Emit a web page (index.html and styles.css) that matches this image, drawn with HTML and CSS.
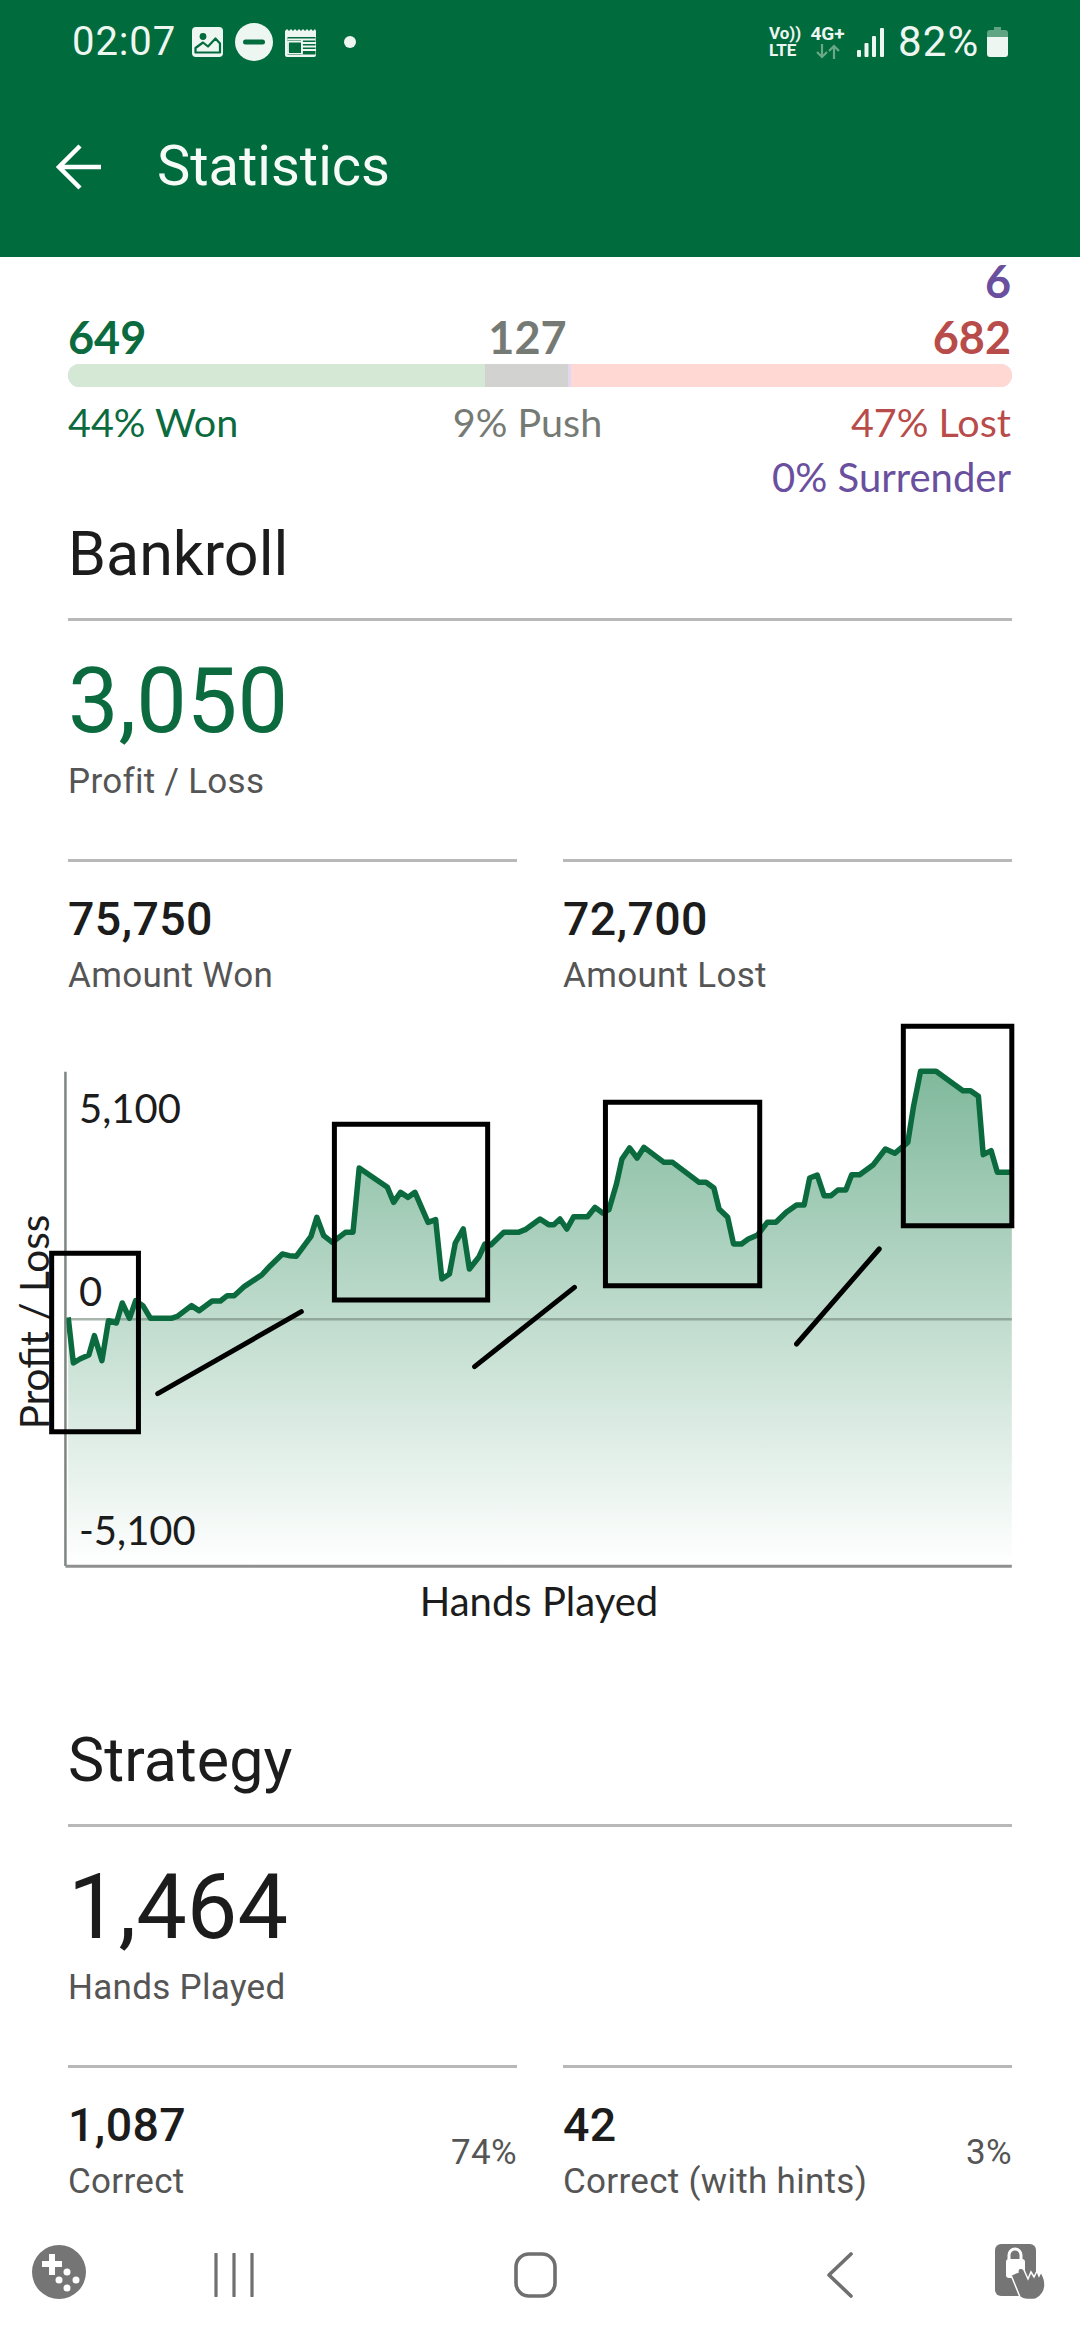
FILE: index.html
```html
<!DOCTYPE html>
<html lang="en">
<head>
<meta charset="utf-8">
<title>Statistics</title>
<link rel="stylesheet" href="styles.css">
</head>
<body>
<div class="screen">
  <header class="header">
    <div class="status">
      <span class="time">02:07</span>
      <svg class="ic-photo" viewBox="0 0 31 30"><rect width="31" height="30" rx="4" fill="#eef6f1"/><circle cx="11" cy="9.5" r="3.4" fill="#006b3c"/><path d="M3.5 25.5V21L11 15.5l5 4 7.5-8 4.5 5v9z" fill="#eef6f1" stroke="#006b3c" stroke-width="2.2" stroke-linejoin="round"/></svg>
      <svg class="ic-dnd" viewBox="0 0 38 38"><circle cx="19" cy="19" r="19" fill="#eef6f1"/><rect x="8" y="16.5" width="22" height="5" rx="2.5" fill="#006b3c"/></svg>
      <svg class="ic-news" viewBox="0 0 33 29"><path d="M0 3l2-2 2 2 2-2 2 2 2-2 2 2 2-2 2 2 2-2 2 2 2-2 2 2 2-2 2 2 2-2 1 2v24a2 2 0 0 1-2 2H2a2 2 0 0 1-2-2z" fill="#eef6f1"/><path d="M2.5 9h28v17.500h-28z" fill="#006b3c"/><path d="M2.500 11.500h28M17 11.500v15M17 15h14M17 18.500h14M17 22h14M3 14h13v11H3z" stroke="#eef6f1" stroke-width="1.800" fill="none"/><path d="M4 14.500h12v10.500H4z" fill="#006b3c"/></svg>
      <span class="dot"></span>
      <span class="status-gap"></span>
      <span class="volte"><b>Vo))</b><b>LTE</b></span>
      <span class="net"><b>4G+</b>
        <svg class="ic-arrows" viewBox="0 0 24 15"><path d="M6 0v13M1 8l5 5 5-5M18 15V2M13 7l5-5 5 5" fill="none" stroke="#6aa988" stroke-width="2.200"/></svg>
      </span>
      <svg class="ic-signal" viewBox="0 0 27 29"><g fill="#eef6f1"><rect x="0" y="22" width="4" height="7" rx="1"/><rect x="7.500" y="15" width="4" height="14" rx="1"/><rect x="15" y="8" width="4" height="21" rx="1"/><rect x="23" y="0" width="4" height="29" rx="1"/></g></svg>
      <span class="battery-text">82%</span>
      <svg class="ic-battery" viewBox="0 0 21 30"><path d="M7 0h7v3h4a3 3 0 0 1 3 3v4H0V6a3 3 0 0 1 3-3h4z" fill="#5fa483"/><path d="M0 10h21v17a3 3 0 0 1-3 3H3a3 3 0 0 1-3-3z" fill="#eef6f1"/></svg>
    </div>
    <div class="appbar">
      <svg class="ic-back" viewBox="0 0 46 46"><path d="M45 23H4M24 2L3 23l21 21" fill="none" stroke="#fff" stroke-width="4.500"/></svg>
      <h1 class="title">Statistics</h1>
    </div>
  </header>

  <main class="content">
    <div class="outcome-top purple">6</div>
    <div class="outcome-row counts">
      <span class="green">649</span><span class="mid gray">127</span><span class="end red">682</span>
    </div>
    <div class="bar">
      <span class="bar-won"></span><span class="bar-push"></span><span class="bar-lost"></span>
    </div>
    <div class="outcome-row labels">
      <span class="green">44% Won</span><span class="mid gray">9% Push</span><span class="end red">47% Lost</span>
    </div>
    <div class="surrender purple">0% Surrender</div>

    <section class="section">
      <h2 class="section-title">Bankroll</h2>
      <div class="hero">
        <div class="hero-value green">3,050</div>
        <div class="caption">Profit / Loss</div>
      </div>
      <div class="pair">
        <div class="cell"><div class="cell-text"><div class="cell-value">75,750</div><div class="caption">Amount Won</div></div></div>
        <div class="cell"><div class="cell-text"><div class="cell-value">72,700</div><div class="caption">Amount Lost</div></div></div>
      </div>
    </section>

    <div class="chart">
      <svg class="plot" viewBox="0 0 3136 1920" preserveAspectRatio="none">
        <defs>
          <linearGradient id="area" gradientUnits="userSpaceOnUse" x1="0" y1="200" x2="0" y2="1701">
            <stop offset="0" stop-color="#7fb89b"/>
            <stop offset="1" stop-color="#ffffff"/>
          </linearGradient>
        </defs>
        <polygon fill="url(#area)" points="198,955 213,1092 232,1080 258,1068 274,1010 296,1085 315,965 338,972 355,912 376,958 394,905 415,920 437,958 497,958 515,952 556,920 578,935 616,906 640,906 660,890 680,890 710,862 760,828 785,800 820,765 840,770 860,772 903,712 920,655 940,710 965,730 1003,700 1025,700 1043,507 1125,565 1143,610 1163,580 1185,595 1205,580 1243,670 1265,662 1283,840 1305,825 1322,732 1345,690 1363,810 1390,775 1408,735 1425,738 1463,700 1505,700 1525,692 1568,660 1593,677 1608,677 1626,660 1646,690 1666,653 1706,653 1728,625 1750,642 1768,632 1790,555 1806,480 1828,447 1850,477 1870,445 1928,490 1953,490 2030,550 2050,550 2073,567 2088,630 2113,655 2130,735 2153,735 2173,720 2200,708 2228,670 2253,670 2283,640 2313,618 2335,618 2351,537 2373,528 2393,590 2413,590 2433,573 2456,573 2473,527 2496,527 2536,497 2571,450 2598,463 2636,430 2653,320 2673,217 2718,217 2796,275 2818,275 2841,292 2855,467 2878,455 2896,520 2938,520 2938,1701 198,1701"/>
        <line class="zero" x1="190" y1="961" x2="2938" y2="961"/>
        <polyline class="curve" points="198,955 213,1092 232,1080 258,1068 274,1010 296,1085 315,965 338,972 355,912 376,958 394,905 415,920 437,958 497,958 515,952 556,920 578,935 616,906 640,906 660,890 680,890 710,862 760,828 785,800 820,765 840,770 860,772 903,712 920,655 940,710 965,730 1003,700 1025,700 1043,507 1125,565 1143,610 1163,580 1185,595 1205,580 1243,670 1265,662 1283,840 1305,825 1322,732 1345,690 1363,810 1390,775 1408,735 1425,738 1463,700 1505,700 1525,692 1568,660 1593,677 1608,677 1626,660 1646,690 1666,653 1706,653 1728,625 1750,642 1768,632 1790,555 1806,480 1828,447 1850,477 1870,445 1928,490 1953,490 2030,550 2050,550 2073,567 2088,630 2113,655 2130,735 2153,735 2173,720 2200,708 2228,670 2253,670 2283,640 2313,618 2335,618 2351,537 2373,528 2393,590 2413,590 2433,573 2456,573 2473,527 2496,527 2536,497 2571,450 2598,463 2636,430 2653,320 2673,217 2718,217 2796,275 2818,275 2841,292 2855,467 2878,455 2896,520 2938,520"/>
        <line class="axis-y" x1="190" y1="218" x2="190" y2="1701"/>
        <line class="axis-x" x1="190" y1="1702" x2="2938" y2="1702"/>
      </svg>
      <span class="tick tick-top">5,100</span>
      <span class="tick tick-zero">0</span>
      <span class="tick tick-bottom">-5,100</span>
      <span class="axis-title-y">Profit / Loss</span>
      <span class="axis-title-x">Hands Played</span>
      <svg class="marks" viewBox="0 0 3136 1920" preserveAspectRatio="none">
        <rect class="mark" x="150" y="763" width="252" height="535"/>
        <rect class="mark" x="971" y="376" width="445" height="527"/>
        <rect class="mark" x="1758" y="310" width="448" height="550"/>
        <rect class="mark" x="2623" y="82" width="315" height="598"/>
        <line class="stroke" x1="458" y1="1184" x2="875" y2="938"/>
        <line class="stroke" x1="1378" y1="1103" x2="1668" y2="865"/>
        <line class="stroke" x1="2313" y1="1035" x2="2553" y2="750"/>
      </svg>
    </div>

    <section class="section strategy">
      <h2 class="section-title">Strategy</h2>
      <div class="hero">
        <div class="hero-value">1,464</div>
        <div class="caption">Hands Played</div>
      </div>
      <div class="pair">
        <div class="cell"><div class="cell-text"><div class="cell-value">1,087</div><div class="caption">Correct</div></div><span class="pct">74%</span></div>
        <div class="cell"><div class="cell-text"><div class="cell-value">42</div><div class="caption">Correct (with hints)</div></div><span class="pct">3%</span></div>
      </div>
    </section>
  </main>

  <nav class="nav">
    <svg class="nav-game" viewBox="0 0 54 54"><circle cx="27" cy="27" r="27" fill="#757575"/><path d="M17 9h6v7h7v6h-7v8h-6v-8h-7v-6h7z" fill="#fff"/><g fill="#fff"><circle cx="35" cy="27" r="3.500"/><circle cx="27" cy="35" r="3.500"/><circle cx="44" cy="35" r="3.500"/><circle cx="35" cy="43" r="3.500"/></g></svg>
    <svg class="nav-recent" viewBox="0 0 40 44"><path d="M2 1v42M20 1v42M38 1v42" stroke="#6f6f6f" stroke-width="3.200" stroke-linecap="round" fill="none"/></svg>
    <svg class="nav-home" viewBox="0 0 43 46"><rect x="2" y="2" width="39" height="42" rx="13" fill="none" stroke="#6f6f6f" stroke-width="3.600"/></svg>
    <svg class="nav-back" viewBox="0 0 27 46"><path d="M25 2L3 23l22 21" fill="none" stroke="#6f6f6f" stroke-width="3.600" stroke-linecap="round" stroke-linejoin="round"/></svg>
    <svg class="nav-lock" viewBox="0 0 55 56"><rect width="41" height="52" rx="6" fill="#757575"/><path d="M14 16v-5a6 6 0 0 1 12 0v5" fill="none" stroke="#fff" stroke-width="3"/><rect x="11" y="15" width="19" height="19" rx="3" fill="#fff"/><path d="M16 31l9 22c3 3 12 3 16 2 5-2 9-8 9-14 0-4-2-10-4-13l-2 4-2-5-3 6-3-5-3 7-4-9c-2-3-7-2-6 2z" fill="#757575" stroke="#fff" stroke-width="1.500"/></svg>
  </nav>
</div>
</body>
</html>
```

FILE: styles.css
```css
* { box-sizing: border-box; margin: 0; padding: 0; }
html, body { width: 1080px; height: 2340px; overflow: hidden; background: #fff; }
body { font-family: Roboto, sans-serif; color: #1c1c1c; }

.screen { width: 1080px; height: 2340px; display: flex; flex-direction: column; }

.header { height: 257px; flex: none; background: #006b3c; color: #fff; position: relative; z-index: 1; }
.status { height: 84px; display: flex; align-items: center; padding-left: 72px; color: #eef6f1; }
.time { font-size: 40px; letter-spacing: 0.9px; line-height: 84px; width: 120px; }
.ic-photo { width: 31px; height: 30px; flex: none; }
.ic-dnd { width: 38px; height: 38px; margin-left: 12px; flex: none; }
.ic-news { width: 33px; height: 29px; margin-left: 12px; flex: none; }
.dot { width: 12px; height: 12px; border-radius: 50%; background: #eef6f1; margin-left: 26px; flex: none; }
.status-gap { flex: 1; }
.volte { display: flex; flex-direction: column; font-size: 17px; line-height: 17px; width: 42px; }
.volte b { font-weight: 700; }
.net { display: flex; flex-direction: column; align-items: center; font-size: 19px; line-height: 17px; width: 33px; white-space: nowrap; }
.net b { font-weight: 700; }
.ic-arrows { width: 24px; height: 15px; margin-top: 2px; }
.ic-signal { width: 27px; height: 29px; margin-left: 13px; margin-top: 1px; flex: none; }
.battery-text { font-size: 42px; letter-spacing: 1.200px; margin-left: 14px; width: 89px; line-height: 84px; white-space: nowrap; }
.ic-battery { width: 21px; height: 30px; margin-right: 72px; flex: none; }

.appbar { height: 173px; display: flex; align-items: center; padding: 0 0 9px 56px; }
.ic-back { width: 46px; height: 46px; flex: none; margin-top: 2px; }
.title { font-size: 56px; font-weight: 400; margin-left: 55px; line-height: 66px; color: #f6fbf8; }

.content { flex: 1; min-height: 0; overflow: hidden; margin-top: -6px; padding: 6px 68px 0; }

.green { color: #0b6b3f; }
.gray { color: #757a74; }
.red { color: #b84c4a; }
.purple { color: #6a4f9e; }

.outcome-top { font-family: Lato, sans-serif; font-weight: 700; font-size: 45px; line-height: 48px; text-align: right; padding-right: 1px; }
.outcome-row { display: grid; grid-template-columns: 417px 85px 442px; font-family: Lato, sans-serif; white-space: nowrap; }
.outcome-row span { display: block; }
.mid { display: flex !important; justify-content: center; }
.end { text-align: right; padding-right: 1px; }
.counts { font-weight: 700; font-size: 45px; line-height: 50px; margin-top: 7px; }
.labels { font-size: 39.500px; line-height: 50px; margin-top: 10px; }
.bar { display: grid; grid-template-columns: 417px 83px 3px 1fr; height: 23px; border-radius: 12px; overflow: hidden; margin-top: 2px; background: #e3d7ef; }
.bar-won { background: #d4e8d5; }
.bar-push { background: #d2d2d0; grid-column: 2; }
.bar-lost { background: #ffd8d4; grid-column: 4; }
.surrender { font-family: Lato, sans-serif; font-size: 40px; line-height: 50px; text-align: right; padding-right: 1px; margin-top: 5px; }

.section { margin-top: 17px; }
.section-title { font-size: 61px; font-weight: 400; line-height: 70px; padding-bottom: 29px; border-bottom: 3px solid #b8b8b8; color: #1c1c1c; }
.hero { padding-top: 35px; }
.hero-value { font-size: 90px; line-height: 92px; }
.caption { font-size: 35px; line-height: 44px; color: #555; letter-spacing: 0.3px; white-space: nowrap; }
.hero .caption { margin-top: 12px; }
.pair { display: grid; grid-template-columns: 1fr 1fr; gap: 46px; margin-top: 55px; }
.cell { border-top: 3px solid #b8b8b8; padding-top: 32px; display: flex; justify-content: space-between; align-items: center; }
.cell-value { font-size: 46.500px; font-weight: 500; line-height: 50px; letter-spacing: 0.4px; }
.cell .caption { margin-top: 10px; }
.pct { font-size: 35px; color: #555; letter-spacing: 0.3px; }

.chart { position: relative; width: 1080px; height: 640px; margin: 1px 0 0 -68px; }
.plot, .marks { position: absolute; left: 0; top: 0; width: 1080px; height: 640px; }
.curve { fill: none; stroke: #0b6b3f; stroke-width: 5.500px; stroke-linejoin: round; vector-effect: non-scaling-stroke; }
.zero { stroke: #6f8578; stroke-opacity: .6; stroke-width: 2.500px; vector-effect: non-scaling-stroke; }
.axis-y { stroke: #7e8681; stroke-width: 2.500px; vector-effect: non-scaling-stroke; }
.axis-x { stroke: #8f8f8f; stroke-width: 3px; vector-effect: non-scaling-stroke; }
.mark { fill: none; stroke: #000; stroke-width: 5px; vector-effect: non-scaling-stroke; }
.stroke { stroke: #000; stroke-width: 5px; stroke-linecap: round; vector-effect: non-scaling-stroke; }
.tick { position: absolute; left: 79px; font-family: Lato, sans-serif; font-size: 40px; line-height: 44px; color: #1c1c1c; }
.tick-top { top: 87px; }
.tick-zero { top: 270px; }
.tick-bottom { top: 509px; }
.axis-title-y { position: absolute; left: 34px; top: 323px; font-family: Lato, sans-serif; font-size: 40.500px; line-height: 44px; color: #1c1c1c; white-space: nowrap; transform: translate(-50%, -50%) rotate(-90deg); }
.axis-title-x { position: absolute; left: 539px; top: 580px; font-family: Lato, sans-serif; font-size: 40px; line-height: 44px; color: #1c1c1c; white-space: nowrap; transform: translateX(-50%); }

.strategy { margin-top: 86px; }

.nav { height: 134px; flex: none; background: #fff; display: flex; align-items: center; padding: 4px 0 0 32px; }
.nav svg { flex: none; }
.nav-game { width: 54px; height: 54px; margin-top: -6px; }
.nav-recent { width: 40px; height: 44px; margin-left: 128px; }
.nav-home { width: 43px; height: 46px; margin-left: 260px; }
.nav-back { width: 27px; height: 46px; margin-left: 269px; }
.nav-lock { width: 55px; height: 56px; margin-left: 142px; margin-top: -6px; }
```
